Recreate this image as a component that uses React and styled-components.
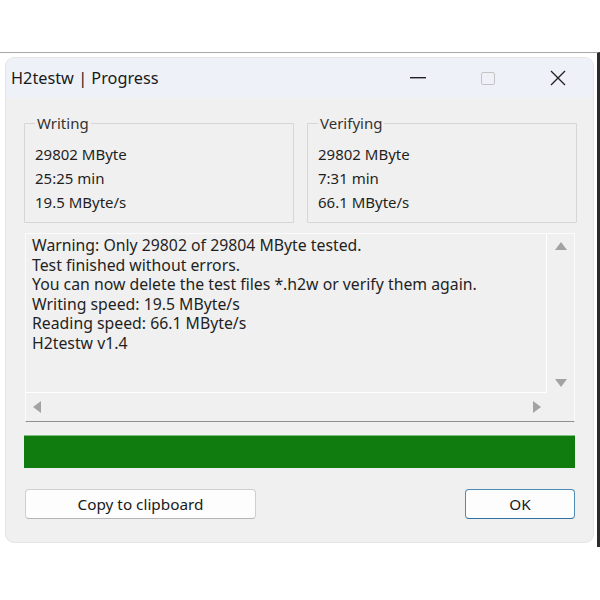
import styled, { createGlobalStyle } from 'styled-components';

const GlobalStyle = createGlobalStyle`
    html, body {
        margin: 0;
        padding: 0;
        background: #ffffff;
    }
    body {
        font-family: "Noto Sans", "Open Sans", sans-serif;
        color: #1f1f1f;
    }
`;

const Page = styled.div`
    width: 600px;
    height: 600px;
    padding-top: 52px;
    box-sizing: border-box;
    background: #ffffff;
`;

const Frame = styled.div`
    width: 600px;
    height: 495px;
    box-sizing: border-box;
    border-top: 1px solid #a8a8a8;
    border-right: 3px solid #2b2b2b;
    padding: 5px 4px 0 6px;
`;

const Window = styled.div`
    display: flex;
    flex-direction: column;
    width: 587px;
    height: 484px;
    box-sizing: border-box;
    border-radius: 8px;
    overflow: hidden;
    background: #f0f0f0;
    box-shadow: 0 0 0 1px #e4e4e4;
`;

const TitleBar = styled.div`
    display: flex;
    align-items: center;
    height: 40px;
    background: #eef2f8;
`;

const Title = styled.span`
    flex: 1;
    padding-left: 5px;
    font-size: 16.3px;
    color: #1a1a1a;
`;

const ControlButton = styled.div`
    display: flex;
    align-items: center;
    justify-content: center;
    width: 70px;
    height: 40px;
`;

const Body = styled.div`
    display: flex;
    flex-direction: column;
    padding: 16px 18px 0 18px;
`;

const Groups = styled.div`
    display: grid;
    grid-template-columns: 270px 270px;
    gap: 13px;
`;

const Group = styled.fieldset`
    margin: 0;
    height: 109px;
    box-sizing: border-box;
    padding: 10px 0 0 10px;
    border: 1px solid #d6d6d6;
    border-radius: 1px;
`;

const Legend = styled.legend`
    padding: 0 2px;
    margin-left: 0;
    font-size: 15px;
    line-height: 18px;
    color: #333;
`;

const StatLine = styled.div`
    font-size: 15px;
    line-height: 24px;
    color: #1f1f1f;
`;

const LogBox = styled.div`
    display: grid;
    grid-template-columns: 1fr 27px;
    grid-template-rows: 1fr 28px;
    margin-top: 10px;
    margin-left: 1px;
    height: 189px;
    box-sizing: border-box;
    border: 1px solid #fbfbfb;
    border-bottom: 1px solid #8f8f8f;
`;

const LogText = styled.div`
    padding: 2px 6px;
    border-right: 1px solid #ffffff;
    border-bottom: 1px solid #ffffff;
    font-size: 15.8px;
    line-height: 19.6px;
    color: #1f1f1f;
    white-space: pre;
    overflow: hidden;
`;

const VScroll = styled.div`
    display: flex;
    flex-direction: column;
    align-items: center;
    justify-content: space-between;
    padding: 8px 0 6px 0;
`;

const HScroll = styled.div`
    display: flex;
    align-items: center;
    justify-content: space-between;
    padding: 0 6px 0 7px;
`;

const Progress = styled.div`
    margin-top: 13px;
    height: 33px;
    box-sizing: border-box;
    background: #107c10;
    border-top: 1px solid #7fc07f;
`;

const ButtonRow = styled.div`
    display: flex;
    justify-content: space-between;
    margin-top: 21px;
    padding-left: 1px;
`;

const Button = styled.div`
    display: flex;
    align-items: center;
    justify-content: center;
    width: ${(p) => p.$width}px;
    height: 30px;
    box-sizing: border-box;
    background: #fdfdfd;
    border: 1px solid ${(p) => (p.$primary ? '#4d8ab5' : '#cfcfcf')};
    border-bottom-color: ${(p) => (p.$primary ? '#2f6f9f' : '#b5b5b5')};
    border-radius: 4px;
    font-size: 15.3px;
    color: #1a1a1a;
`;

const Arrow = ({ dir }) => {
    const pts = {
        up: '6,0 12,8 0,8',
        down: '0,0 12,0 6,8',
        left: '8,0 8,12 0,6',
        right: '0,0 8,6 0,12',
    }[dir];
    const vertical = dir === 'up' || dir === 'down';
    return (
        <svg width={vertical ? 12 : 8} height={vertical ? 8 : 12}>
            <polygon points={pts} fill="#a3a3a3" />
        </svg>
    );
};

const logLines = [
    'Warning: Only 29802 of 29804 MByte tested.',
    'Test finished without errors.',
    'You can now delete the test files *.h2w or verify them again.',
    'Writing speed: 19.5 MByte/s',
    'Reading speed: 66.1 MByte/s',
    'H2testw v1.4',
];

const StatGroup = ({ title, lines }) => (
    <Group>
        <Legend>{title}</Legend>
        {lines.map((l) => (
            <StatLine key={l}>{l}</StatLine>
        ))}
    </Group>
);

export default function App() {
    return (
        <Page>
            <GlobalStyle />
            <Frame>
                <Window>
                    <TitleBar>
                        <Title>H2testw | Progress</Title>
                        <ControlButton>
                            <svg width="16" height="2">
                                <rect width="16" height="1.4" fill="#222" />
                            </svg>
                        </ControlButton>
                        <ControlButton>
                            <svg width="14" height="13">
                                <rect x="0.5" y="0.5" width="13" height="12" rx="1.5" fill="none" stroke="#c4c4c4" />
                            </svg>
                        </ControlButton>
                        <ControlButton>
                            <svg width="16" height="16">
                                <path d="M1 1 L15 15 M15 1 L1 15" stroke="#222" strokeWidth="1.4" />
                            </svg>
                        </ControlButton>
                    </TitleBar>
                    <Body>
                        <Groups>
                            <StatGroup title="Writing" lines={['29802 MByte', '25:25 min', '19.5 MByte/s']} />
                            <StatGroup title="Verifying" lines={['29802 MByte', '7:31 min', '66.1 MByte/s']} />
                        </Groups>
                        <LogBox>
                            <LogText>{logLines.join('\n')}</LogText>
                            <VScroll>
                                <Arrow dir="up" />
                                <Arrow dir="down" />
                            </VScroll>
                            <HScroll>
                                <Arrow dir="left" />
                                <Arrow dir="right" />
                            </HScroll>
                            <div />
                        </LogBox>
                        <Progress />
                        <ButtonRow>
                            <Button $width={231}>Copy to clipboard</Button>
                            <Button $width={110} $primary>OK</Button>
                        </ButtonRow>
                    </Body>
                </Window>
            </Frame>
        </Page>
    );
}
